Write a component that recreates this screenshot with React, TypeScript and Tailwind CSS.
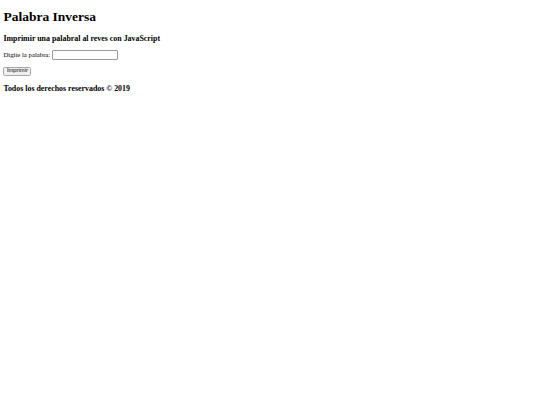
export default function App() {
    return (
        <main
            className="bg-white min-h-screen px-[3.4px] pt-[9px] text-black"
            style={{ fontFamily: '"Liberation Serif", "Times New Roman", serif' }}
        >
            <h1 className="text-[13.5px] font-bold leading-[1.15] mb-[9px]">Palabra Inversa</h1>
            <h3 className="text-[7.9px] font-bold leading-[1.15] mb-[7.8px]">Imprimir una palabral al reves con JavaScript</h3>
            <div className="text-[6.75px] leading-[1.15] flex items-center gap-[1.5px] h-[9.5px]">
                <label htmlFor="palabra">Digite la palabra:</label>
                <input
                    id="palabra"
                    type="text"
                    className="w-[66px] h-[9.5px] border border-[#9a9a9a] rounded-[1px] bg-white"
                />
            </div>
            <div className="mt-[7px] flex">
                <button
                    className="text-[5.8px] leading-none w-[28px] h-[9px] border border-[#a8a8a8] rounded-[1.5px] bg-[#efefef] text-black"
                    style={{ fontFamily: '"Liberation Sans", Arial, sans-serif' }}
                >
                    Imprimir
                </button>
            </div>
            <h3 className="text-[7.9px] font-bold leading-[1.15] mt-[7.8px]">Todos los derechos reservados © 2019</h3>
        </main>
    );
}
